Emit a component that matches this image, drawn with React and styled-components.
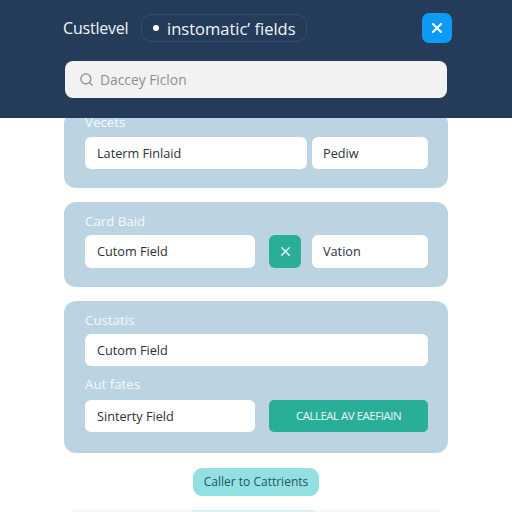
import styled, { createGlobalStyle } from "styled-components"
import { X, Search } from "lucide-react"

const GlobalStyle = createGlobalStyle`
    html, body {
        margin: 0;
        padding: 0;
        height: 512px;
        overflow: hidden;
        background: #ffffff;
        font-family: "Open Sans", "Liberation Sans", sans-serif;
    }
`

const Page = styled.div`
    width: 512px;
    height: 512px;
    overflow: hidden;
    display: flex;
    flex-direction: column;
`

const Header = styled.header`
    position: relative;
    z-index: 1;
    flex: none;
    height: 118px;
    box-sizing: border-box;
    padding: 13px 60px 0 63px;
    background: #243c5a;
`

const TopRow = styled.div`
    display: flex;
    align-items: center;
    height: 30px;
`

const Title = styled.h1`
    margin: 0 11px 0 0;
    width: 67px;
    font-size: 16px;
    font-weight: 400;
    letter-spacing: -0.2px;
    color: #f2f5f8;
    white-space: nowrap;
`

const Pill = styled.div`
    display: flex;
    align-items: center;
    gap: 8px;
    width: 166px;
    height: 28px;
    box-sizing: border-box;
    padding-left: 11px;
    border: 1px solid #34506f;
    border-radius: 10px;
    font-size: 16.5px;
    color: #f2f5f8;
    white-space: nowrap;
`

const Dot = styled.span`
    width: 6px;
    height: 6px;
    border-radius: 50%;
    background: #ffffff;
`

const CloseButton = styled.button`
    margin-left: auto;
    width: 30px;
    height: 30px;
    padding: 0;
    border: 0;
    border-radius: 7px;
    background: #0d9bf5;
    color: #ffffff;
    display: flex;
    align-items: center;
    justify-content: center;
`

const SearchBar = styled.div`
    display: flex;
    align-items: center;
    gap: 6px;
    margin: 18px 5px 0 2px;
    height: 37px;
    box-sizing: border-box;
    padding-left: 14px;
    border-radius: 8px;
    background: #f2f2f2;
    font-size: 13.8px;
    line-height: 35px;
    color: #8f8f90;
`

const Main = styled.main`
    display: flex;
    flex-direction: column;
    gap: 14px;
    margin-top: -6px;
    padding: 0 64px;
`

const Card = styled.section`
    display: flex;
    flex-direction: column;
    box-sizing: border-box;
    padding: ${p => p.$top}px 20px ${p => p.$bottom}px 21px;
    border-radius: 12px;
    background: #bcd4e1;
`

const Label = styled.div`
    height: 14px;
    line-height: 14px;
    margin-bottom: ${p => p.$gap}px;
    font-size: 13.3px;
    color: #f4f8fb;
    white-space: nowrap;
`

const Row = styled.div`
    display: flex;
    height: 32.5px;
    gap: ${p => p.$gap}px;
    margin-bottom: ${p => p.$after || 0}px;
`

const Field = styled.div`
    flex: ${p => (p.$width ? "none" : 1)};
    width: ${p => (p.$width ? `${p.$width}px` : "auto")};
    margin-left: ${p => p.$left || 0}px;
    display: flex;
    align-items: center;
    box-sizing: border-box;
    padding-left: ${p => p.$pad || 12}px;
    border-radius: 6px;
    background: #ffffff;
    font-size: 12.7px;
    line-height: 30px;
    color: #2b3138;
    white-space: nowrap;
`

const IconButton = styled.button`
    flex: none;
    width: 32px;
    margin-left: 14px;
    padding: 0;
    border: 0;
    border-radius: 6px;
    background: #29ae98;
    color: #ffffff;
    display: flex;
    align-items: center;
    justify-content: center;
`

const ActionButton = styled.button`
    flex: none;
    width: 159px;
    margin-left: 14px;
    padding: 0;
    border: 0;
    border-radius: 5px;
    background: #29ae98;
    color: #eafaf6;
    font-family: inherit;
    font-size: 11.5px;
    letter-spacing: -0.5px;
    white-space: nowrap;
`

const Footer = styled.div`
    display: flex;
    justify-content: center;
    margin-top: 1px;
`

const CancelButton = styled.button`
    width: 126px;
    height: 28px;
    padding: 0;
    border: 0;
    border-radius: 9px;
    background: #93e0e3;
    color: #24565c;
    font-family: inherit;
    font-size: 12px;
    white-space: nowrap;
`

const NextStrip = styled.div`
    display: flex;
    justify-content: center;
    height: 2px;
    margin: 0 8px;
    background: #f5f7f8;
`

const NextStripAccent = styled.span`
    width: 122px;
    margin-left: -6px;
    background: #d9f1f9;
`

export default function App() {
    return (
        <Page>
            <GlobalStyle />
            <Header>
                <TopRow>
                    <Title>Custlevel</Title>
                    <Pill><Dot />instomatic’ fields</Pill>
                    <CloseButton><X size={16} strokeWidth={3} /></CloseButton>
                </TopRow>
                <SearchBar>
                    <Search size={15} color="#85888c" />
                    Daccey Ficlon
                </SearchBar>
            </Header>
            <Main>
                <Card $top={3} $bottom={19}>
                    <Label $gap={7.5}>Vecets</Label>
                    <Row $gap={5}>
                        <Field>Laterm Finlaid</Field>
                        <Field $width={116} $pad={11}>Pediw</Field>
                    </Row>
                </Card>
                <Card $top={12} $bottom={19}>
                    <Label $gap={7}>Card Baid</Label>
                    <Row $gap={0}>
                        <Field $width={170}>Cutom Field</Field>
                        <IconButton><X size={15} strokeWidth={2} /></IconButton>
                        <Field $width={116} $pad={11} $left={11}>Vation</Field>
                    </Row>
                </Card>
                <Card $top={12} $bottom={20.5}>
                    <Label $gap={7}>Custatis</Label>
                    <Row $gap={0} $after={11}>
                        <Field>Cutom Field</Field>
                    </Row>
                    <Label $gap={8.5}>Aut fates</Label>
                    <Row $gap={0}>
                        <Field $width={170}>Sinterty Field</Field>
                        <ActionButton>CALLEAL AV EAEFIAIN</ActionButton>
                    </Row>
                </Card>
                <Footer>
                    <CancelButton>Caller to Cattrients</CancelButton>
                </Footer>
                <NextStrip>
                    <NextStripAccent />
                </NextStrip>
            </Main>
        </Page>
    )
}
